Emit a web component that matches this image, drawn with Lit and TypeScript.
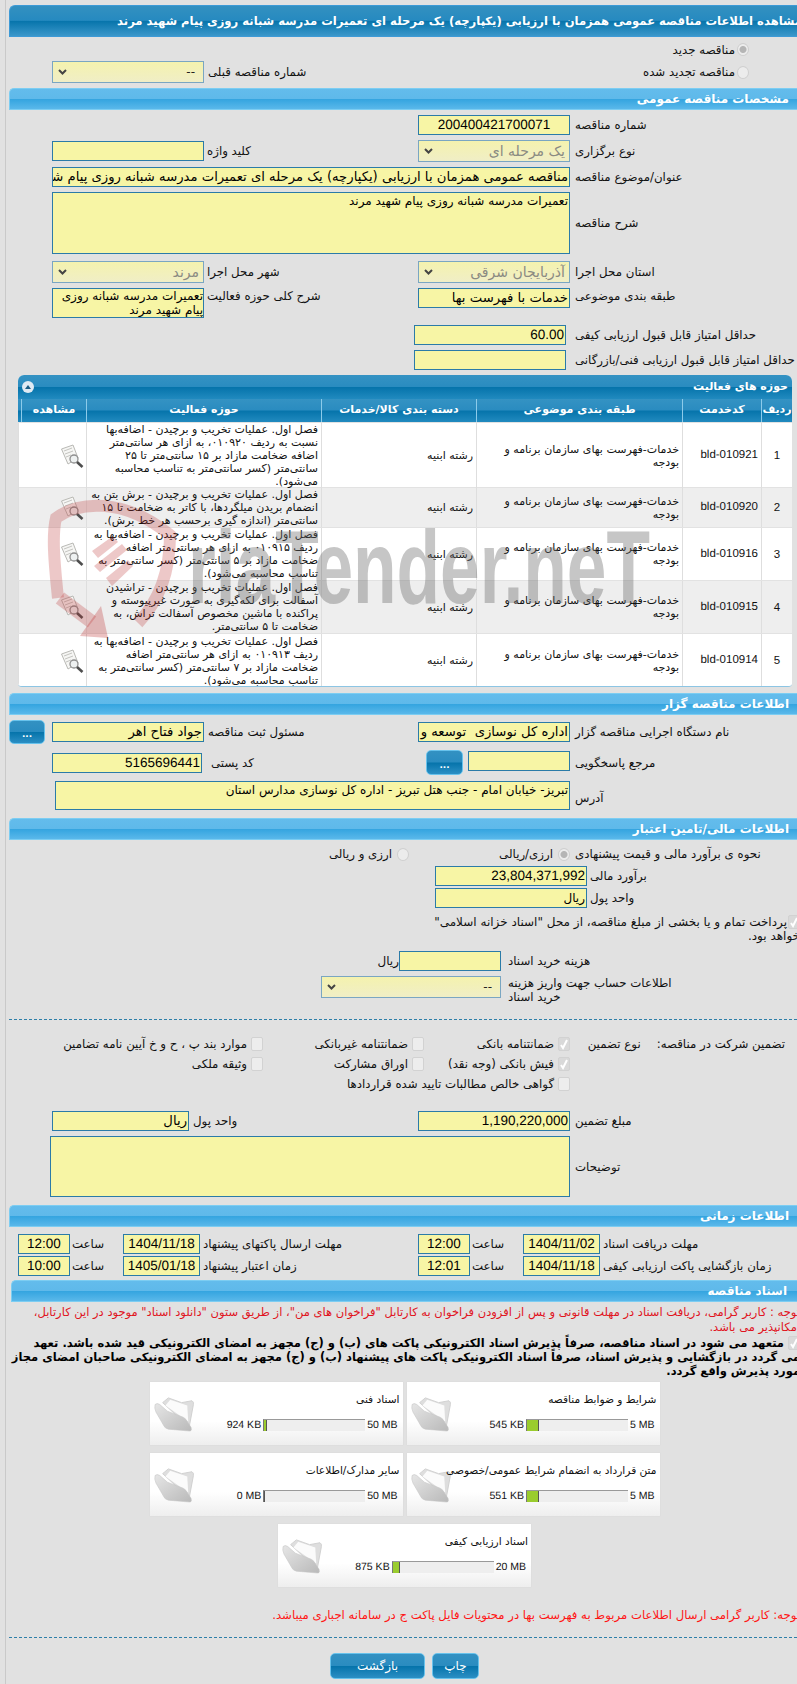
import { LitElement, html, css, svg } from "lit";
import { customElement } from "lit/decorators.js";

const rows = [
  { n: "1", c: "bld-010921", h: 65, t: ["فصل اول. عملیات تخریب و برچیدن - اضافه‌بها", "نسبت به ردیف ۰۱۰۹۲۰، به ازای هر سانتی‌متر", "اضافه ضخامت مازاد بر ۱۵ سانتی‌متر تا ۲۵", "سانتی‌متر (کسر سانتی‌متر به تناسب محاسبه", "می‌شود)."] },
  { n: "2", c: "bld-010920", h: 40, t: ["فصل اول. عملیات تخریب و برچیدن - برش بتن به", "انضمام بریدن میلگردها، با کاتر به ضخامت تا ۱۵", "سانتی‌متر (اندازه گیری برحسب هر خط برش)."] },
  { n: "3", c: "bld-010916", h: 53, t: ["فصل اول. عملیات تخریب و برچیدن - اضافه‌بها به", "ردیف ۰۱۰۹۱۵ به ازای هر سانتی‌متر اضافه", "ضخامت مازاد بر ۵ سانتی‌متر (کسر سانتی‌متر به", "تناسب محاسبه می‌شود)."] },
  { n: "4", c: "bld-010915", h: 53, t: ["فصل اول. عملیات تخریب و برچیدن - تراشیدن", "آسفالت برای لکه‌گیری به صورت غیرپیوسته و", "پراکنده با ماشین مخصوص آسفالت تراش، به", "ضخامت تا ۵ سانتی‌متر."] },
  { n: "5", c: "bld-010914", h: 54, t: ["فصل اول. عملیات تخریب و برچیدن - اضافه‌بها به", "ردیف ۰۱۰۹۱۳ به ازای هر سانتی‌متر اضافه", "ضخامت مازاد بر ۷ سانتی‌متر (کسر سانتی‌متر به", "تناسب محاسبه می‌شود)."] },
];

const cards = [
  { t: "شرایط و ضوابط مناقصه", u: "545 KB", m: "5 MB", p: 12 },
  { t: "اسناد فنی", u: "924 KB", m: "50 MB", p: 3 },
  { t: "متن قرارداد به انضمام شرایط عمومی/خصوصی", u: "551 KB", m: "5 MB", p: 12 },
  { t: "سایر مدارک/اطلاعات", u: "0 MB", m: "50 MB", p: 1 },
  { t: "اسناد ارزیابی کیفی", u: "875 KB", m: "20 MB", p: 7 },
];

const docIcon = svg`<svg class="docicon" viewBox="0 0 24 24" width="24" height="24">
  <path d="M1.5 5 L13 1 L18 14 L8 20 Z" fill="#f6f6f4" stroke="#b9b9b5" stroke-width="1"/>
  <path d="M4 7 L12 4 M5 10 L13 7 M6 13 L11 11" stroke="#c4c4c0" stroke-width="1" fill="none"/>
  <circle cx="14" cy="15" r="4" fill="#eef1f1" stroke="#8f8f8f" stroke-width="1.3"/>
  <path d="M17 18 L22.5 23" stroke="#4e4e4e" stroke-width="2.6"/>
</svg>`;

const folderIcon = svg`<svg class="folder" viewBox="0 0 44 38" width="42" height="36">
  <defs><linearGradient id="fg" x1="0" y1="0" x2="1" y2="1"><stop offset="0" stop-color="#e6e6e6"/><stop offset="1" stop-color="#b9b9b9"/></linearGradient></defs>
  <path d="M10 7 L16 2 L30 7 L41 5 Q43 6 42.5 9 L38 33 Z" fill="#dedede" stroke="#cfcfcf"/>
  <path d="M13 10 L18 4 L36 10 L37 27 Z" fill="#fbfbfb"/>
  <path d="M2 9 Q1 13 3 17 L11 31 Q12 34 16 35 L39 37 Q41 37 40 33 L34 24 Q32 22 28 21 L15 16 L7 9 Q4 7 2 9 Z" fill="url(#fg)" stroke="#c4c4c4" stroke-width=".6"/>
</svg>`;

const watermark = svg`<svg class="wm" viewBox="0 0 797 1684" width="797" height="1684">
  <path d="M58 598 C54 560 52 535 56 518 C78 502 122 496 170 535 C170 570 160 600 138 623" fill="none" stroke="rgba(190,50,50,.27)" stroke-width="12"/>
  <path d="M60 598 L92 622" fill="none" stroke="rgba(190,50,50,.27)" stroke-width="14"/>
  <path d="M80 636 L101 606 L108 638 Z" fill="rgba(190,50,50,.3)"/>
  <path d="M92 551 L113 536 L118 542 L98 558 Z M94 566 L122 544 L127 550 L100 572 Z M106 578 L128 560 L133 566 L112 586 Z" fill="rgba(190,50,50,.27)"/>
  <text x="188" y="603" font-family="'Liberation Sans',sans-serif" font-weight="700" font-size="104" textLength="462" lengthAdjust="spacingAndGlyphs" fill="rgba(105,105,105,.38)" direction="ltr" unicode-bidi="embed">riaTender.neT</text>
</svg>`;

@customElement("app-root")
export class AppRoot extends LitElement {
  static styles = css`
    :host { display: block; width: 797px; height: 1684px; overflow: hidden; position: relative; background: #e1e1e1; border: 0; font-family: "DejaVu Sans", sans-serif; font-size: 11px; color: #111; }
    .edge { position: absolute; left: 5px; top: 0; bottom: 0; width: 1px; background: #c9c9c9; }
    .wm { position: absolute; left: 0; top: 0; pointer-events: none; }
    .page { margin-left: 9px; padding-top: 5px; width: 788px; }
    .page.top0 { padding-top: 0; }

    .title { height: 32px; box-sizing: border-box; border: 1px solid #3d9ad6; border-width: 1px 0 1px 1px; border-radius: 6px 0 0 0; background: linear-gradient(#3390c0 0, #268ac0 48%, #0674ab 50%, #3b97ca 100%); color: #fff; font-weight: 700; font-size: 11.6px; line-height: 31px; text-align: right; white-space: nowrap; direction: rtl; overflow: visible; }
    .title span { display: block; margin-right: -5px; }
    .bar { height: 22px; box-sizing: border-box; border: 1px solid #7ccdf2; border-width: 1px 0 1px 1px; border-radius: 5px 0 0 0; background: linear-gradient(#63bcec 0, #5fb9ea 48%, #35a5e0 52%, #5ab8ea 100%); color: #fff; font-weight: 700; font-size: 12px; line-height: 20px; padding-right: 8px; direction: rtl; text-align: right; }
    .bar.alt { margin-left: 2px; padding-right: 10px; }

    .g { display: grid; grid-template-columns: 43px 152px 214px 152px 5px 222px; align-items: center; }
    .g-money { grid-template-columns: 43px 137px 229px 152px 5px 222px; }
    .mt2 { margin-top: 2px; } .mt4 { margin-top: 4px; } .mt5 { margin-top: 5px; } .mt6 { margin-top: 6px; } .mt7 { margin-top: 7px; } .mt8 { margin-top: 8px; } .mt14 { margin-top: 14px; } .mt15 { margin-top: 15px; } .mt17 { margin-top: 17px; }
    .c2 { grid-column: 2; } .c3 { grid-column: 3; } .c4 { grid-column: 4; } .c6 { grid-column: 6; } .c24 { grid-column: 2 / 5; } .c46 { grid-column: 4 / 7; } .c1 { grid-column: 1; }
    .lb { direction: rtl; text-align: left; white-space: nowrap; font-size: 11.8px; line-height: 16px; }
    .lb.in { padding-left: 4px; }
    .lb.in3 { padding-left: 3px; }
    .lb.in7 { padding-left: 7px; }
    .f { box-sizing: border-box; height: 20px; border: 1px solid #2b7ba8; background: #f7f5a5; direction: rtl; text-align: right; font-size: 12px; line-height: 18px; white-space: pre; overflow: hidden; padding: 0 1px; color: #000; }
    .big { font-size: 13.2px; }
    .num { font-family: "Liberation Sans", sans-serif; font-size: 13.5px; direction: ltr; text-rendering: geometricPrecision; }
    .ctr { text-align: center; }
    .ta { white-space: pre-wrap; line-height: 16px; }
    .h62 { height: 62px; } .h61 { height: 61px; } .h29 { height: 29px; } .h30 { height: 30px; line-height: 14px; white-space: normal; align-self: start; padding-right: 0; }
    .sel { box-sizing: border-box; height: 22px; border: 1px solid #7aa6c2; background: linear-gradient(#f4f2ae, #f0eec6); direction: rtl; font-size: 14px; line-height: 20px; color: #8a8a82; padding: 0 4px 0 3px; display: flex; justify-content: space-between; align-items: center; white-space: nowrap; }
    .sel.dark { color: #222; padding-right: 8px; font-size: 12px; }
    .chev { width: 9px; height: 6px; flex: none; margin-left: 2px; }
    .shift { margin-left: -4px; margin-right: 4px; }
    .radio { flex: none; box-sizing: border-box; width: 12px; height: 13px; border-radius: 50%; border: 1px solid #cfcfcf; background: #ececec; display: block; }
    .radio.on { background: radial-gradient(circle, #b5b5b5 0 3px, #ececec 4px); }
    .cb { flex: none; box-sizing: border-box; width: 12px; height: 14px; border: 1px solid #d2d2d2; border-radius: 2px; background: #ededed; display: block; }
    .cb svg { display: block; width: 10px; height: 12px; }
    .cb.on { background: #d9d9d9; }
    .opt { display: flex; direction: rtl; align-items: center; gap: 4px; white-space: nowrap; font-size: 11.8px; }
    .radline { display: flex; justify-content: flex-end; }
    .radline .opt { padding-right: 48px; gap: 2px; }
    .rowa { height: 24px; padding-top: 1px; box-sizing: border-box; }
    .rowb { height: 22px; }
    .tall { align-self: start; padding-top: 0; line-height: 16px; }
    .f.tall { line-height: 18px; font-size: 13.2px; }

    .panel { margin-top: 5px; margin-left: 18px; width: 774px; height: 312px; box-sizing: border-box; border-radius: 6px 6px 4px 4px; background: #fff; border-bottom: 1px solid #8cc5e4; overflow: hidden; position: relative; }
    .ptitle { height: 24px; background: linear-gradient(#3492c3 0, #2a8cc0 48%, #0674ab 52%, #218abf 100%); color: #fff; font-weight: 700; font-size: 11px; line-height: 23px; direction: rtl; padding-right: 4px; position: relative; }
    .toggle { position: absolute; left: 4px; top: 6px; width: 12px; height: 12px; background: #dfeaf3; border-radius: 50%; display: flex; align-items: center; justify-content: center; }
    .toggle i { width: 0; height: 0; border-left: 3px solid transparent; border-right: 3px solid transparent; border-bottom: 4px solid #1a5c84; display: block; }
    .tr { display: grid; grid-template-columns: 68px 235px 155px 206px 79px 31px; }
    .thead { height: 23px; background: linear-gradient(#3492c3 0, #2a8cc0 48%, #0674ab 52%, #218abf 100%); color: #fff; font-weight: 700; font-size: 11px; }
    .thead div { border-left: 1px solid #8ccbea; text-align: center; direction: rtl; line-height: 22px; }
    .thead div:first-child { margin-left: 3px; }
    .tb { box-sizing: border-box; border-top: 1px solid #e2e2e2; background: #fff; }
    .tb.even { background: #eeeeee; }
    .tb > div { border-left: 1px solid #dedede; display: flex; align-items: center; direction: rtl; font-size: 11px; line-height: 13px; padding-right: 3px; overflow: visible; min-width: 0; white-space: nowrap; }
    .tb > .ic { padding: 0 2px 0 0; }
    .tb > .code { font-family: "Liberation Sans", sans-serif; font-size: 11.5px; text-rendering: geometricPrecision; }
    .tb > .mid { justify-content: center; padding: 0; font-family: "Liberation Sans", sans-serif; font-size: 11.5px; }
    .lines { display: block; line-height: 13px; }
    .lines span { display: block; }
    .docicon { display: block; }

    .btn { box-sizing: border-box; border: 1px solid #67c2ec; border-radius: 5px; background: linear-gradient(#3391c2 0, #2a8cc0 48%, #0674ab 52%, #2b8fc4 100%); color: #fff; direction: rtl; display: flex; align-items: center; justify-content: center; font-size: 12px; font-weight: 400; padding: 0; }
    .dots { width: 36px; height: 24px; font-weight: 700; font-size: 9px; padding-top: 4px; }
    .bwide { width: 37px; height: 25px; font-weight: 700; font-size: 9px; padding-top: 4px; flex: none; }
    .h24 { height: 24px; }
    .h25 { height: 25px; }
    .pair { display: flex; gap: 5px; margin-left: 8px; height: 25px; }
    .pair .f { flex: 1; margin-top: 1px; }
    .lefti { width: 150px; }
    .g-addr { align-items: start; height: 29px; }
    .addrlb { padding-top: 9px; }
    .addrf { margin-left: 3px; }
    .descf { margin-left: -2px; }

    .g-est { display: grid; grid-template-columns: 426px 152px 3px 1fr; align-items: center; }
    .g-rad-grid { display: grid; grid-template-columns: 561px 227px; height: 15px; align-items: center; }
    .g-rad-grid .lb { padding-left: 5px; }
    .rad-set { display: flex; direction: rtl; padding-right: 0; }
    .rad-set .opt { width: 161px; gap: 5px; flex: none; }
    .c-est { grid-column: 2; }
    .lb.est { grid-column: 4; padding-left: 0; }
    .note { margin-top: 7px; margin-right: -3px; direction: rtl; font-size: 12px; line-height: 14px; white-space: nowrap; }
    .note .cb { display: inline-block; vertical-align: -3px; margin-left: 1px; }
    .g-cost { display: grid; grid-template-columns: 390px 102px 7px 1fr; align-items: center; }
    .g-acc { display: grid; grid-template-columns: 312px 180px 7px 1fr; align-items: start; }
    .unit { direction: rtl; text-align: right; font-size: 12px; }
    .acclb { line-height: 14px; font-size: 11.8px; direction: rtl; text-align: left; white-space: nowrap; padding-top: 0; }
    .dash { border-top: 1px dashed #2e7fa8; height: 0; }
    .g-guar { display: grid; grid-template-columns: 254px 161px 146px 227px; height: 20px; align-items: center; }
    .guar-first { margin-top: 14px; }
    .guar-r { display: flex; direction: rtl; gap: 16px; padding-right: 12px; white-space: nowrap; font-size: 11.8px; }
    .g-time { display: grid; grid-template-columns: 9px 52px 53px 77px 218px 52px 53px 77px 1fr; align-items: center; }
    .saat { direction: rtl; text-align: left; padding-left: 2px; font-size: 11.8px; }
    .timef { padding: 0; }
    .red { color: #e0141e; direction: rtl; font-size: 11.5px; line-height: 14.5px; white-space: nowrap; margin-right: -3px; margin-top: 3px; }
    .bold { direction: rtl; font-size: 11.5px; font-weight: 700; line-height: 14px; white-space: nowrap; margin-right: -3px; margin-top: 2px; color: #000; }
    .bold .cb { display: inline-block; vertical-align: -3px; margin-left: 4px; }
    .cardwrap { width: 791px; margin-top: 4px; }
    .cards { width: 510px; margin: 0 auto; display: flex; flex-wrap: wrap; justify-content: center; gap: 8px 4px; direction: rtl; }
    .card { width: 253px; height: 63px; box-sizing: border-box; background: linear-gradient(#fff 0, #fff 62%, #eeeeee 100%); box-shadow: 0 0 1px #cfcfcf; direction: ltr; display: grid; grid-template-columns: 47px 1fr; position: relative; }
    .card .folder { display: block; margin: 14px 0 0 3px; }
    .cardr { display: flex; flex-direction: column; min-width: 0; }
    .ct { direction: rtl; text-align: right; font-size: 10.6px; line-height: 13px; padding: 11px 3px 0 0; height: 24px; white-space: nowrap; box-sizing: border-box; }
    .prog { display: flex; align-items: center; justify-content: flex-end; height: 12px; margin-top: 13px; padding-right: 5px; font-family: "Liberation Sans", sans-serif; font-size: 10.5px; text-rendering: geometricPrecision; }
    .track { width: 102px; height: 12px; box-sizing: border-box; border-top: 1px solid #999; border-left: 1px solid #777; background: #eeeeee; margin: 0 2px 0 2px; flex: none; }
    .fill { height: 11px; background: #9acc2e; border-right: 1px solid #555; box-sizing: border-box; }
    .red2 { color: #ff1515; direction: rtl; font-size: 11.7px; line-height: 15px; white-space: nowrap; margin-top: 21px; margin-right: -3px; }
    .btns { display: flex; justify-content: center; gap: 7px; width: 791px; direction: rtl; margin-top: 15px; }
    .b1 { width: 47px; height: 26px; }
    .b2 { width: 95px; height: 26px; }
  `;

  private chev() {
    return html`<svg class="chev" viewBox="0 0 9 6"><path d="M1 1 L4.5 4.5 L8 1" fill="none" stroke="#444" stroke-width="2"/></svg>`;
  }
  private cb(on = false) {
    return html`<span class="cb ${on ? "on" : ""}">${on ? html`<svg viewBox="0 0 10 12"><path d="M2 7 L4 10 L8 2" fill="none" stroke="#fff" stroke-width="2"/></svg>` : ""}</span>`;
  }
  private opt(text: string, on = false) {
    return html`<div class="opt">${this.cb(on)}<span>${text}</span></div>`;
  }
  private rad(text: string, on = false) {
    return html`<div class="opt"><span class="radio ${on ? "on" : ""}"></span><span>${text}</span></div>`;
  }

  render() {
    return html`
      <div class="edge"></div>
      <div class="page">
        <div class="title"><span>مشاهده اطلاعات مناقصه عمومی همزمان با ارزیابی (یکپارچه) یک مرحله ای تعمیرات مدرسه شبانه روزی پیام شهید مرند</span></div>
        <div class="radline rowa">${this.rad("مناقصه جدید", true)}</div>
        <div class="g rowb">
          <div class="sel dark c2"><span>--</span>${this.chev()}</div>
          <div class="lb in c3">شماره مناقصه قبلی</div>
          <div class="radline c46">${this.rad("مناقصه تجدید شده")}</div>
        </div>

        <div class="bar mt5">مشخصات مناقصه عمومی</div>
        <div class="g mt5">
          <div class="f num ctr c4">200400421700071</div>
          <div class="lb c6">شماره مناقصه</div>
        </div>
        <div class="g mt5">
          <div class="f c2">&nbsp;</div>
          <div class="lb in3 c3">کلید واژه</div>
          <div class="sel c4"><span>یک مرحله ای</span>${this.chev()}</div>
          <div class="lb c6">نوع برگزاری</div>
        </div>
        <div class="g mt5">
          <div class="f big c24">مناقصه عمومی همزمان با ارزیابی (یکپارچه) یک مرحله ای تعمیرات مدرسه شبانه روزی پیام شهید مرند</div>
          <div class="lb c6">عنوان/موضوع مناقصه</div>
        </div>
        <div class="g mt5">
          <div class="f ta h62 c24">تعمیرات مدرسه شبانه روزی پیام شهید مرند</div>
          <div class="lb c6">شرح مناقصه</div>
        </div>
        <div class="g mt7">
          <div class="sel c2"><span>مرند</span>${this.chev()}</div>
          <div class="lb in3 c3">شهر محل اجرا</div>
          <div class="sel c4"><span>آذربایجان شرقی</span>${this.chev()}</div>
          <div class="lb c6">استان محل اجرا</div>
        </div>
        <div class="g mt5">
          <div class="f h30 c2">تعمیرات مدرسه شبانه روزی پیام شهید مرند</div>
          <div class="lb in3 c3 tall">شرح کلی حوزه فعالیت</div>
          <div class="f c4 tall">خدمات با فهرست بها</div>
          <div class="lb c6 tall">طبقه بندی موضوعی</div>
        </div>
        <div class="g mt7">
          <div class="f num shift c4">60.00</div>
          <div class="lb c6">حداقل امتیاز قابل قبول ارزیابی کیفی</div>
        </div>
        <div class="g mt5">
          <div class="f shift c4">&nbsp;</div>
          <div class="lb c6">حداقل امتیاز قابل قبول ارزیابی فنی/بازرگانی</div>
        </div>
      </div>

      <div class="panel">
        <div class="ptitle">حوزه های فعالیت<span class="toggle"><i></i></span></div>
        <div class="tr thead">
          <div>مشاهده</div><div>حوزه فعالیت</div><div>دسته بندی کالا/خدمات</div><div>طبقه بندی موضوعی</div><div>کدخدمت</div><div>ردیف</div>
        </div>
        ${rows.map((r, i) => html`
          <div class="tr tb ${i % 2 ? "even" : ""}" style="height:${r.h}px">
            <div class="ic">${docIcon}</div>
            <div><span class="lines">${r.t.map((l) => html`<span>${l}</span>`)}</span></div>
            <div>رشته ابنیه</div>
            <div><span class="lines"><span>خدمات-فهرست بهای سازمان برنامه و</span><span>بودجه</span></span></div>
            <div class="code">${r.c}</div>
            <div class="mid">${r.n}</div>
          </div>`)}
      </div>

      <div class="page top0">
        <div class="bar mt6">اطلاعات مناقصه گزار</div>
        <div class="g mt5 h24">
          <div class="btn dots c1">...</div>
          <div class="f big c2">جواد فتاح اهر</div>
          <div class="lb in c3">مسئول ثبت مناقصه</div>
          <div class="f big c4">اداره کل نوسازی  توسعه و تجهیز مدارس</div>
          <div class="lb c6">نام دستگاه اجرایی مناقصه گزار</div>
        </div>
        <div class="g mt6 h25">
          <div class="f num lefti c2">5165696441</div>
          <div class="lb in7 c3">کد پستی</div>
          <div class="pair c4"><div class="btn bwide">...</div><div class="f">&nbsp;</div></div>
          <div class="lb c6">مرجع پاسخگویی</div>
        </div>
        <div class="g g-addr mt6">
          <div class="f ta h29 addrf c24">تبریز- خیابان امام - جنب هتل تبریز - اداره کل نوسازی مدارس استان</div>
          <div class="lb addrlb c6">آدرس</div>
        </div>
        <div class="bar mt8">اطلاعات مالی/تامین اعتبار</div>
        <div class="g-rad-grid mt6">
          <div class="rad-set">${this.rad("ارزی/ریالی", true)}${this.rad("ارزی و ریالی")}</div>
          <div class="lb">نحوه ی برآورد مالی و قیمت پیشنهادی</div>
        </div>
        <div class="g-est mt5">
          <div class="f num c-est">23,804,371,992</div>
          <div class="lb est">برآورد مالی</div>
        </div>
        <div class="g-est mt2">
          <div class="f c-est">ریال</div>
          <div class="lb est">واحد پول</div>
        </div>
        <div class="note">${this.cb(true)}پرداخت تمام و یا بخشی از مبلغ مناقصه، از محل "اسناد خزانه اسلامی"<br />خواهد بود.</div>
        <div class="g-cost mt8">
          <div class="unit">ریال</div>
          <div class="f">&nbsp;</div>
          <div></div>
          <div class="lb">هزینه خرید اسناد</div>
        </div>
        <div class="g-acc mt5">
          <div></div>
          <div class="sel dark"><span>--</span>${this.chev()}</div>
          <div></div>
          <div class="acclb">اطلاعات حساب جهت واریز هزینه<br />خرید اسناد</div>
        </div>
        <div class="dash mt15"></div>

        <div class="g-guar guar-first">
          <div>${this.opt("موارد بند پ ، ح و خ آیین نامه تضامین")}</div>
          <div>${this.opt("ضمانتنامه غیربانکی")}</div>
          <div>${this.opt("ضمانتنامه بانکی", true)}</div>
          <div class="guar-r"><span>تضمین شرکت در مناقصه:</span><span>نوع تضمین</span></div>
        </div>
        <div class="g-guar">
          <div>${this.opt("وثیقه ملکی")}</div>
          <div>${this.opt("اوراق مشارکت")}</div>
          <div>${this.opt("فیش بانکی (وجه نقد)", true)}</div>
        </div>
        <div class="g-guar">
          <div></div><div></div>
          <div>${this.opt("گواهی خالص مطالبات تایید شده قراردادها")}</div>
        </div>

        <div class="g g-money mt17">
          <div class="f big c2">ریال</div>
          <div class="lb in c3">واحد پول</div>
          <div class="f num c4">1,190,220,000</div>
          <div class="lb c6">مبلغ تضمین</div>
        </div>
        <div class="g mt5">
          <div class="f h61 c24 descf">&nbsp;</div>
          <div class="lb c6">توضیحات</div>
        </div>
        <div class="bar mt8">اطلاعات زمانی</div>
        <div class="g-time mt7">
          <div></div>
          <div class="f num ctr timef">12:00</div><div class="saat">ساعت</div>
          <div class="f num ctr timef">1404/11/18</div><div class="lb in3">مهلت ارسال پاکتهای پیشنهاد</div>
          <div class="f num ctr timef">12:00</div><div class="saat">ساعت</div>
          <div class="f num ctr timef">1404/11/02</div><div class="lb in3">مهلت دریافت اسناد</div>
        </div>
        <div class="g-time mt2">
          <div></div>
          <div class="f num ctr timef">10:00</div><div class="saat">ساعت</div>
          <div class="f num ctr timef">1405/01/18</div><div class="lb in3">زمان اعتبار پیشنهاد</div>
          <div class="f num ctr timef">12:01</div><div class="saat">ساعت</div>
          <div class="f num ctr timef">1404/11/18</div><div class="lb in3">زمان بازگشایی پاکت ارزیابی کیفی</div>
        </div>
        <div class="bar alt mt4">اسناد مناقصه</div>
        <div class="red">توجه : کاربر گرامی، دریافت اسناد در مهلت قانونی و پس از افزودن فراخوان به کارتابل "فراخوان های من"، از طریق ستون "دانلود اسناد" موجود در این کارتابل،<br />امکانپذیر می باشد.</div>
        <div class="bold">${this.cb(true)}متعهد می شود در اسناد مناقصه، صرفاً پذیرش اسناد الکترونیکی پاکت های (ب) و (ج) مجهز به امضای الکترونیکی قید شده باشد. تعهد<br />می گردد در بازگشایی و پذیرش اسناد، صرفاً اسناد الکترونیکی پاکت های پیشنهاد (ب) و (ج) مجهز به امضای الکترونیکی صاحبان امضای مجاز<br />مورد پذیرش واقع گردد.</div>
        <div class="cardwrap"><div class="cards">
          ${cards.map((c) => html`
            <div class="card">
              ${folderIcon}
              <div class="cardr">
                <div class="ct">${c.t}</div>
                <div class="prog">
                  <span>${c.u}</span>
                  <div class="track"><div class="fill" style="width:${c.p}%"></div></div>
                  <span>${c.m}</span>
                </div>
              </div>
            </div>`)}
        </div></div>
        <div class="red2">توجه: کاربر گرامی ارسال اطلاعات مربوط به فهرست بها در محتویات فایل پاکت ج در سامانه اجباری میباشد.</div>
        <div class="dash mt14"></div>
        <div class="btns">
          <div class="btn b1">چاپ</div>
          <div class="btn b2">بازگشت</div>
        </div>
      </div>
      ${watermark}
    `;
  }
}
